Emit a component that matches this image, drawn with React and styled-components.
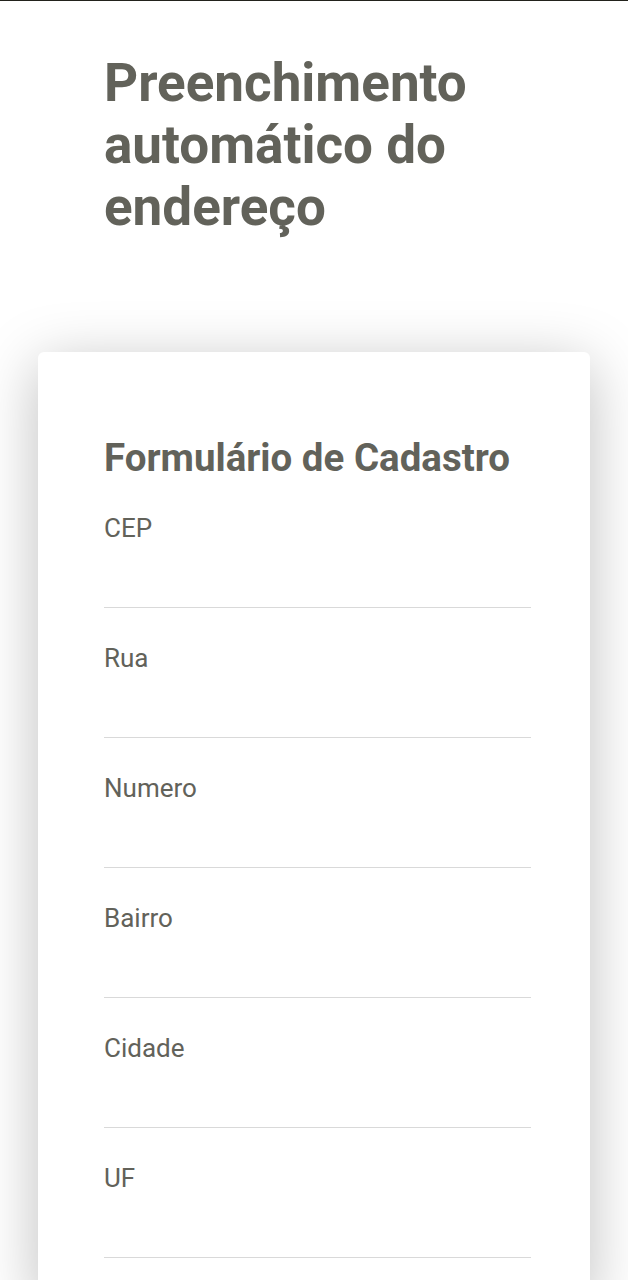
import React from 'react';
import styled, { createGlobalStyle } from 'styled-components';

const GlobalStyle = createGlobalStyle`
  * {
    box-sizing: border-box;
  }

  body {
    margin: 0;
    background: #ffffff;
    font-family: Roboto, "Liberation Sans", sans-serif;
    color: #62625a;
  }
`;

const fields = ['CEP', 'Rua', 'Numero', 'Bairro', 'Cidade', 'UF'];

function App() {
  return (
    <>
      <GlobalStyle />
      <Page>
        <Title>Preenchimento automático do endereço</Title>
        <Card>
          <CardTitle>Formulário de Cadastro</CardTitle>
          <Form>
            {fields.map((name) => (
              <Field key={name}>
                <Label htmlFor={name}>{name}</Label>
                <Input id={name} type="text" />
              </Field>
            ))}
          </Form>
        </Card>
      </Page>
    </>
  );
}

const Page = styled.main`
  min-height: 1280px;
  border-top: 1px solid #22221c;
  padding: 51px 38px 0;
  display: flex;
  flex-direction: column;
`;

const Title = styled.h1`
  margin: 0 0 114px;
  padding: 0 60px 0 66px;
  font-size: 53px;
  line-height: 62px;
  font-weight: 700;
  color: #62625a;
`;

const Card = styled.section`
  background: #ffffff;
  border-radius: 6px;
  box-shadow: 0 12px 60px rgba(0, 0, 0, 0.26);
  padding: 84px 59px 40px 66px;
`;

const CardTitle = styled.h2`
  margin: 0 0 35px;
  font-size: 38.5px;
  line-height: 43px;
  font-weight: 700;
  color: #62625a;
`;

const Form = styled.form`
  display: flex;
  flex-direction: column;
  gap: 36px;
`;

const Field = styled.div`
  display: flex;
  flex-direction: column;
`;

const Label = styled.label`
  font-size: 26px;
  line-height: 28px;
  color: #62625a;
`;

const Input = styled.input`
  height: 66px;
  border: none;
  border-bottom: 1px solid #d9d9d9;
  outline: none;
  background: transparent;
  font-family: inherit;
  font-size: 22px;
  color: #62625a;
  padding: 0;
`;

export default App;
